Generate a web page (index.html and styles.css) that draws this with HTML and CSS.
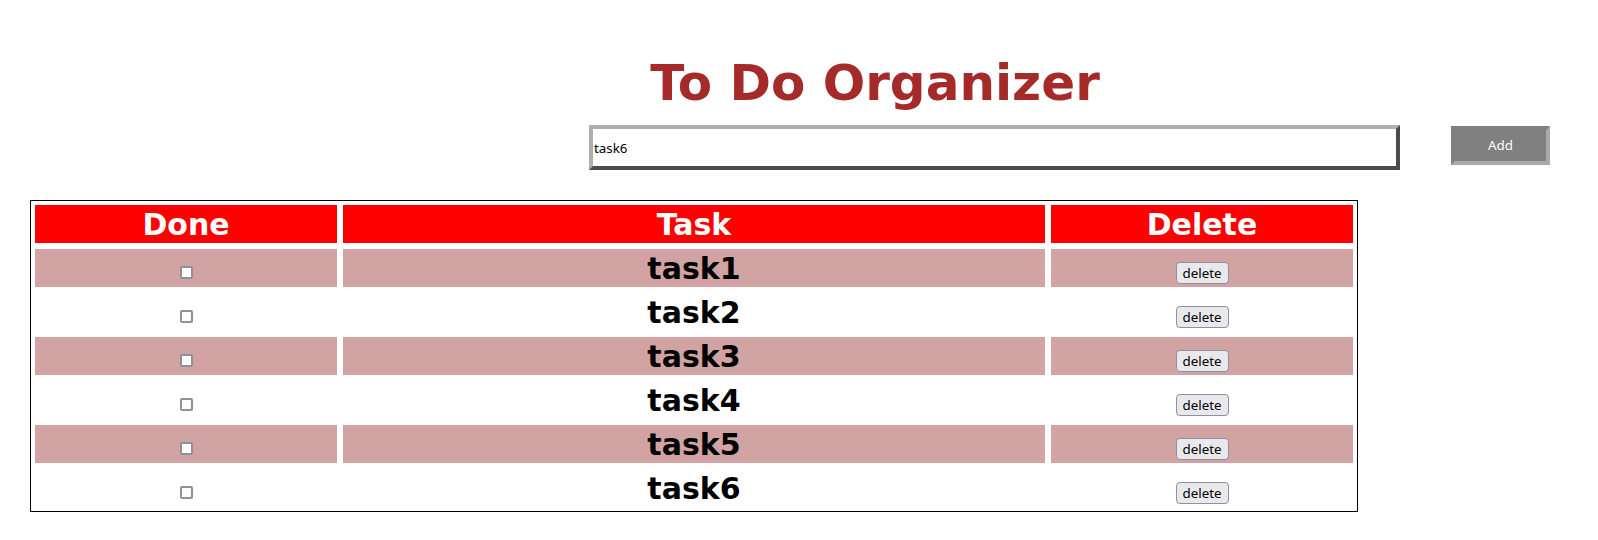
FILE: index.html
```html
<!DOCTYPE html>
<html lang="en">
<head>
<meta charset="utf-8">
<title>To Do Organizer</title>
<link rel="stylesheet" href="styles.css">
</head>
<body>
  <h1 class="title">To Do Organizer</h1>
  <div class="entry">
    <input class="task-input" type="text" value="task6">
    <button class="add-btn">Add</button>
  </div>
  <table class="tasks">
    <thead>
      <tr>
        <th class="col-done">Done</th>
        <th class="col-task">Task</th>
        <th class="col-delete">Delete</th>
      </tr>
    </thead>
    <tbody>
      <tr class="odd"><td><input class="check" type="checkbox"></td><td>task1</td><td><button class="del-btn">delete</button></td></tr>
      <tr><td><input class="check" type="checkbox"></td><td>task2</td><td><button class="del-btn">delete</button></td></tr>
      <tr class="odd"><td><input class="check" type="checkbox"></td><td>task3</td><td><button class="del-btn">delete</button></td></tr>
      <tr><td><input class="check" type="checkbox"></td><td>task4</td><td><button class="del-btn">delete</button></td></tr>
      <tr class="odd"><td><input class="check" type="checkbox"></td><td>task5</td><td><button class="del-btn">delete</button></td></tr>
      <tr><td><input class="check" type="checkbox"></td><td>task6</td><td><button class="del-btn">delete</button></td></tr>
    </tbody>
  </table>
</body>
</html>
```
FILE: styles.css
```css
body {
  margin: 8px;
  font-family: "DejaVu Sans", sans-serif;
  background: #ffffff;
}

.title {
  margin: 47px 0 0 152px;
  font-size: 50px;
  line-height: 56px;
  font-weight: bold;
  color: #a52a2a;
  text-align: center;
}

.entry {
  display: flex;
  align-items: flex-start;
  margin: 14px 0 0 581px;
}

.task-input {
  box-sizing: border-box;
  width: 811px;
  height: 45px;
  margin: 0;
  padding: 1px 1px;
  border-style: solid;
  border-width: 4px;
  border-color: #afafaf #4b4b4b #4b4b4b #afafaf;
  background: #ffffff;
  color: #000000;
  font-family: "Noto Sans", sans-serif;
  font-size: 13.333px;
  outline: none;
}

.add-btn {
  box-sizing: border-box;
  width: 99px;
  height: 39px;
  margin: 1px 0 0 51px;
  padding: 0 0 1px 0;
  border-style: solid;
  border-width: 4px;
  border-color: #808080 #aaaaaa #aaaaaa #808080;
  background: #808080;
  color: #ffffff;
  font-family: "Noto Sans", sans-serif;
  font-size: 13.333px;
}

.tasks {
  margin: 30px 0 0 22px;
  width: 1328px;
  table-layout: fixed;
  border: 1px solid #000000;
  border-spacing: 2px;
}

.tasks th,
.tasks td {
  height: 38px;
  padding: 0;
  border: 2px solid #ffffff;
  text-align: center;
  font-weight: bold;
  font-size: 30px;
}

.tasks th {
  background: #ff0000;
  color: #ffffff;
}

.tasks td {
  color: #000000;
}

.col-done,
.col-delete {
  width: 302px;
}

.col-task {
  width: 702px;
}

.tasks tr.odd td {
  background: #d1a3a3;
}

.check {
  appearance: none;
  -webkit-appearance: none;
  box-sizing: border-box;
  width: 13px;
  height: 13px;
  margin: 3px 3px 3px 4px;
  border: 2px solid #8f8f9d;
  border-radius: 2px;
  background: #ffffff;
  vertical-align: -3px;
}

.del-btn {
  box-sizing: border-box;
  height: 22px;
  margin: 0;
  padding: 1px 6px;
  border: 1px solid #8f8f9d;
  border-radius: 4px;
  background: #e9e9ed;
  color: #000000;
  font-family: "Noto Sans", sans-serif;
  font-size: 13.333px;
  font-weight: normal;
  line-height: 18px;
  vertical-align: 1px;
}
```
